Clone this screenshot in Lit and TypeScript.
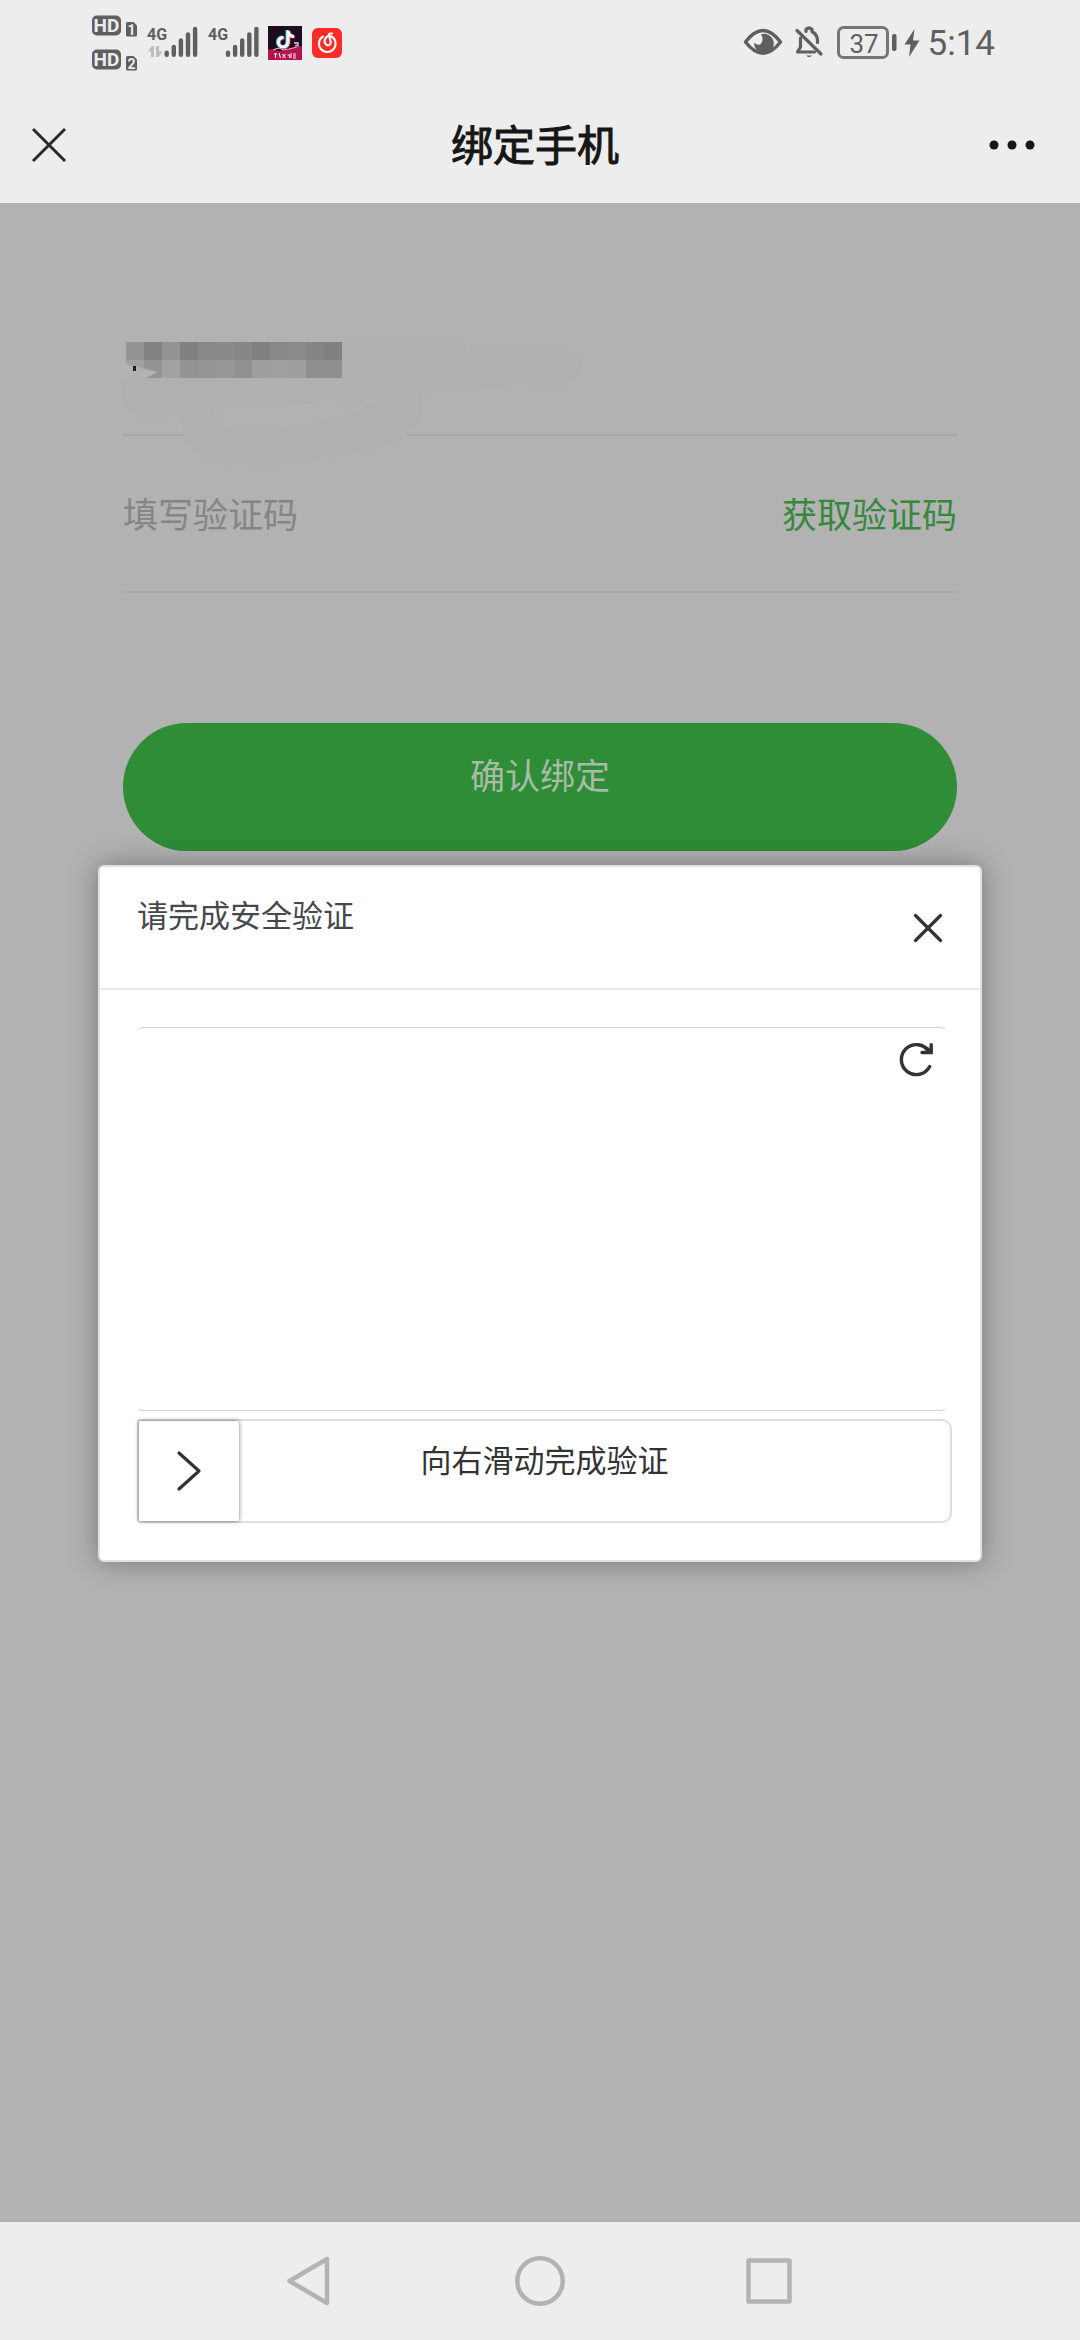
import { LitElement, html, css, svg } from "lit";
import { customElement, state } from "lit/decorators.js";

/* Grey levels of the masked phone number, one entry per cell. */
const MOSAIC = [
  ["#949494", "#838383", "#949494", "#818181", "#888888", "#898989", "#878787", "#808080", "#888888", "#8b8b8b", "#858585", "#818181"],
  ["#a1a1a1", "#949494", "#a2a2a2", "#949494", "#969696", "#979797", "#909090", "#9e9e9e", "#a0a0a0", "#9e9e9e", "#8f8f8f", "#8f8f8f"],
];
const CELL = 18;

@customElement("status-bar")
class StatusBar extends LitElement {
  static styles = css`
    :host {
      display: flex;
      justify-content: space-between;
      height: 86px;
      padding: 0 85px 0 90px;
      color: #5f5f5f;
      font-family: Roboto, "Noto Sans", sans-serif;
    }
    .group { display: flex; height: 86px; }
    svg { display: block; }
    .net { font-size: 16px; font-weight: 700; }
    .hd { font-weight: 700; font-size: 19px; }
    .sim { font-weight: 700; font-size: 14px; }
    .time { font-size: 35px; line-height: 88px; }
  `;

  private bars(x: number) {
    return svg`
      <g stroke="#5f5f5f" stroke-width="4.4" stroke-linecap="round">
        ${[52.8, 47, 40.5, 34.5, 29].map(
          (top, i) => svg`<path d="M${x + i * 7.1} ${top}V54.8"/>`
        )}
      </g>`;
  }

  render() {
    return html`
      <div class="group">
        <svg width="256" height="86" viewBox="90 0 256 86" aria-label="信号">
          <g fill="#5f5f5f">
            <rect x="92" y="15.500" width="29" height="20" rx="5"/>
            <rect x="92" y="49.500" width="29" height="20" rx="5"/>
            <path d="M127.500 22h6l3.500 3.500V35q0 1.500-1.500 1.500h-8q-1.500 0-1.500-1.500V23.500q0-1.500 1.500-1.500z"/>
            <path d="M127.500 56h6l3.500 3.500V69q0 1.500-1.500 1.500h-8q-1.500 0-1.500-1.500V57.500q0-1.500 1.500-1.500z"/>
          </g>
          <g class="hd" fill="#ededed" text-anchor="middle">
            <text x="106.500" y="32">HD</text>
            <text x="106.500" y="66">HD</text>
          </g>
          <g class="sim" fill="#ededed" text-anchor="middle">
            <text x="131.500" y="34.500">1</text>
            <text x="131.500" y="68.500">2</text>
          </g>
          <g class="net" fill="#5f5f5f">
            <text x="147" y="40">4G</text>
            <text x="208" y="40">4G</text>
          </g>
          <g fill="#bdbdbd">
            <path d="M148 51.500l4-5.500h2v11h-3v-5.500z"/>
            <path d="M162.500 51.500l-4 5.500h-2.500V46h3v5.500z"/>
          </g>
          ${this.bars(166.7)} ${this.bars(228)}
          <rect x="268" y="26" width="34" height="34" fill="#1e0c22"/>
          <path d="M268 49l12 2 10-2 12-3v14h-34z" fill="#b5134f"/>
          <path d="M273 50l6-2 4 2 6-1 8-2" stroke="#e8a9c4" stroke-width="1.200" fill="none"/>
          <g fill="none" stroke-width="3">
            <path d="M287 30v12a4.800 4.800 0 1 1-4.500-5M287 31q1.500 5 6.500 5" stroke="#29dfe0"/>
            <path d="M289 31v12a4.800 4.800 0 1 1-4.500-5M289 32q1.500 5 6 5" stroke="#f2365c"/>
            <path d="M288 30.500v12a4.800 4.800 0 1 1-4.500-5M288 31.500q1.500 5 6 5" stroke="#fff"/>
          </g>
          <path d="M294 43h4v4M295 46l2-1" stroke="#f3cfdc" stroke-width="1.300" fill="none"/>
          <path d="M274 54h3M275.500 53v5M279 53l1.500 5M282.500 54l3 4M285.500 54l-3 4M287.500 55h2v3M291 53v5M293 54h3M293 56h3M293 58h3" stroke="#fbe3ec" stroke-width="1.100" fill="none"/>
          <rect x="312" y="28" width="30" height="30" rx="6" fill="#fb2b26"/>
          <g fill="none" stroke="#fff" stroke-width="2.100" stroke-linecap="round">
            <path d="M323 36.500a8.300 8.300 0 1 0 8.500 0q-3-1.500-5.500 1-3 4.500.5 7.500 4 1 4.300-2.800Q330 39 329 36q-1-3 3-2.500"/>
          </g>
        </svg>
      </div>
      <div class="group">
        <svg width="187" height="86" viewBox="740 0 187 86" aria-label="电量">
          <path d="M744.500 42Q762 19 779.500 42 762 64.500 744.500 42z" fill="none" stroke="#5f5f5f" stroke-width="3.400" stroke-linejoin="round"/>
          <path d="M760 34.200a9.800 9.800 0 1 1-6.800 8.600q4.300 3.600 7.200.4 2.600-4.500-.4-9z" fill="#5f5f5f"/>
          <g fill="none" stroke="#5f5f5f" stroke-width="3.200" stroke-linecap="round" stroke-linejoin="round">
            <path d="M796 30.500l24 23.500"/>
            <path d="M799.500 38v9l-3 5h17"/>
            <path d="M805 31.500V29.500q3-3 6 0v2q5.500 3 5.500 9v2"/>
          </g>
          <path d="M805 55.500h6q-3 3-6 0z" fill="#5f5f5f"/>
          <rect x="837.500" y="27.500" width="49" height="30" rx="5" fill="none" stroke="#757575" stroke-width="3"/>
          <text x="863" y="52.500" text-anchor="middle" font-size="26" fill="#5f5f5f">37</text>
          <rect x="891" y="34" width="4.500" height="17" rx="2" fill="#5f5f5f"/>
          <path d="M913.500 29l-10 15.500h6L908 57l10.500-16.500H912z" fill="#5f5f5f"/>
        </svg>
        <span class="time">5:14</span>
      </div>
    `;
  }
}

@customElement("title-bar")
class TitleBar extends LitElement {
  static styles = css`
    :host {
      display: flex;
      align-items: center;
      height: 117px;
      font-family: "Noto Sans CJK SC", sans-serif;
    }
    h1 {
      flex: 1;
      margin: 0;
      padding: 0 0 4px 28px;
      font-size: 42px;
      line-height: 60px;
      font-weight: 400;
      -webkit-text-stroke: 1px #161616;
      text-align: center;
      color: #161616;
    }
    button {
      display: grid;
      place-items: center;
      height: 117px;
      padding: 0;
      border: 0;
      background: none;
    }
    .close { width: 98px; }
    .more { width: 136px; }
  `;

  render() {
    return html`
      <button class="close" aria-label="关闭">
        <svg width="36" height="36" viewBox="0 0 36 36" fill="none" stroke="#2b2b2b" stroke-width="3">
          <path d="M2 2l32 32M34 2L2 34"/>
        </svg>
      </button>
      <h1>绑定手机</h1>
      <button class="more" aria-label="更多">
        <svg width="46" height="12" viewBox="0 0 46 12" fill="#161616">
          <circle cx="5" cy="6" r="4.500"/><circle cx="23" cy="6" r="4.500"/><circle cx="41" cy="6" r="4.500"/>
        </svg>
      </button>
    `;
  }
}

@customElement("bind-form")
class BindForm extends LitElement {
  static styles = css`
    :host {
      display: block;
      padding: 94px 123px 0;
      font-family: "Noto Sans CJK SC", sans-serif;
      font-size: 35px;
    }
    .field {
      position: relative;
      display: flex;
      align-items: center;
      box-sizing: border-box;
      border-bottom: 2px solid #a8a8a8;
    }
    .phone { height: 139px; }
    .code { height: 157px; padding-bottom: 2px; }
    .mask {
      position: absolute;
      left: -8px;
      top: 38px;
    }
    input {
      flex: 1;
      min-width: 0;
      height: 56px;
      padding: 0;
      border: 0;
      outline: 0;
      background: none;
      font: inherit;
      color: #333;
    }
    input::placeholder { color: #858585; opacity: 1; }
    button {
      padding: 0;
      border: 0;
      font: inherit;
    }
    .send { background: none; color: #35893c; line-height: 56px; }
    .submit {
      display: block;
      width: 100%;
      height: 128px;
      margin-top: 130px;
      padding-bottom: 28px;
      border-radius: 64px;
      background: #2f8c37;
      color: #a9bba7;
    }
  `;

  render() {
    return html`
      <div class="field phone">
        <svg class="mask" width="480" height="140" viewBox="115 335 480 140" role="img" aria-label="手机号">
          <path fill="#b0b0b0" d="M126 342H467V351H570C588 353 584 386 560 386Q490 386 422 394C426 428 405 440 377 448Q300 466 235 467C195 462 180 440 180 414L140 420Q112 404 126 382z"/>
          <path fill="#b2b2b2" d="M214 409L378 400Q325 428 250 431 214 432 214 409z"/>
          ${MOSAIC.map((row, r) =>
            row.map(
              (tone, c) =>
                svg`<rect x=${126 + c * CELL} y=${342 + r * CELL} width=${CELL} height=${CELL} fill=${tone}/>`
            )
          )}
          <path fill="#b2b2b2" d="M125 364l33 8-13 6.500h-20z"/>
          <path fill="#1c1c1c" d="M133 366h3v5h-3z"/>
        </svg>
      </div>
      <div class="field code">
        <input type="text" inputmode="numeric" placeholder="填写验证码" aria-label="填写验证码">
        <button class="send">获取验证码</button>
      </div>
      <button class="submit">确认绑定</button>
    `;
  }
}

@customElement("slide-captcha")
class SlideCaptcha extends LitElement {
  static styles = css`
    :host {
      display: block;
      flex: 1;
      border: 2px solid #dfe2e4;
      border-radius: 6px;
      background: #fff;
      box-shadow: 0 0 28px rgba(0, 0, 0, 0.34);
      font-family: "Noto Sans CJK SC", sans-serif;
      font-size: 31px;
      line-height: 48px;
    }
    header {
      display: flex;
      align-items: center;
      justify-content: space-between;
      box-sizing: border-box;
      height: 123px;
      padding: 0 22px 0 37px;
      border-bottom: 2px solid #e7eaeb;
    }
    h2 {
      margin: 0;
      padding-bottom: 28px;
      font-size: inherit;
      font-weight: 400;
      color: #45494c;
    }
    button {
      display: grid;
      place-items: center;
      width: 60px;
      height: 60px;
      padding: 0;
      border: 0;
      background: none;
    }
    .body { padding: 37px 28px 37px 37px; }
    .panel {
      display: flex;
      justify-content: flex-end;
      box-sizing: border-box;
      height: 384px;
      margin-right: 5px;
      padding: 2px 0;
      border: 1px solid transparent;
      border-top-color: #d2d2d2;
      border-bottom-color: #d2d2d2;
      border-radius: 6px;
    }
    .track {
      display: grid;
      box-sizing: border-box;
      height: 104px;
      margin-top: 8px;
      border: 2px solid #dedede;
      border-radius: 2px 10px 10px 2px;
    }
    .track > * { grid-area: 1 / 1; }
    .hint {
      align-self: center;
      padding-bottom: 24px;
      text-align: center;
      color: #333;
    }
    input {
      appearance: none;
      width: 100%;
      height: 100px;
      margin: 0;
      outline: 0;
      background: none;
    }
    input::-webkit-slider-thumb {
      appearance: none;
      width: 100px;
      height: 100px;
      border-radius: 2px;
      background: #fff
        url("data:image/svg+xml,%3Csvg xmlns='http://www.w3.org/2000/svg' width='28' height='44' fill='none' stroke='%23333' stroke-width='3.2' stroke-linecap='round' stroke-linejoin='round'%3E%3Cpath d='M4 4l20 18L4 40'/%3E%3C/svg%3E")
        center no-repeat;
      box-shadow: 0 0 4px rgba(0, 0, 0, 0.55);
    }
  `;

  @state() private offset = 0;

  private slide(e: Event) {
    this.offset = Number((e.target as HTMLInputElement).value);
  }

  render() {
    return html`
      <header>
        <h2>请完成安全验证</h2>
        <button aria-label="关闭">
          <svg width="30" height="30" viewBox="0 0 30 30" fill="none" stroke="#333" stroke-width="3.200" stroke-linecap="round">
            <path d="M2.500 2.500l25 25M27.500 2.500l-25 25"/>
          </svg>
        </button>
      </header>
      <div class="body">
        <div class="panel">
          <button aria-label="刷新">
            <svg width="36" height="36" viewBox="0 0 36 36" fill="none" stroke="#333" stroke-linecap="round">
              <path d="M31.700 24.500A15 15 0 1 1 31 9.500" stroke-width="3.400"/>
              <path d="M33.200 2.800V10.500H24" stroke-width="3.400" stroke-linejoin="miter"/>
              <path d="M28.500 6.500l3.500 3" stroke-width="4"/>
            </svg>
          </button>
        </div>
        <div class="track">
          <label class="hint" for="slider">向右滑动完成验证</label>
          <input id="slider" type="range" min="0" max="100" .value=${String(this.offset)} @input=${this.slide}>
        </div>
      </div>
    `;
  }
}

@customElement("system-nav")
class SystemNav extends LitElement {
  static styles = css`
    :host {
      display: flex;
      justify-content: center;
      align-items: center;
      gap: 169px;
      height: 118px;
    }
    button {
      display: grid;
      place-items: center;
      width: 60px;
      height: 60px;
      padding: 0;
      border: 0;
      background: none;
    }
  `;

  render() {
    const icon = (shape: unknown) => html`
      <svg width="60" height="60" viewBox="0 0 60 60" fill="none" stroke="#b3b3b3" stroke-width="4.500" stroke-linejoin="round">${shape}</svg>`;
    return html`
      <button aria-label="返回">${icon(svg`<path d="M8.500 30L46 8V52z"/>`)}</button>
      <button aria-label="主屏幕">${icon(svg`<circle cx="30" cy="30" r="22.700"/>`)}</button>
      <button aria-label="最近任务">${icon(svg`<rect x="9.500" y="9.500" width="41" height="41"/>`)}</button>
    `;
  }
}

@customElement("app-root")
class AppRoot extends LitElement {
  static styles = css`
    :host {
      display: flex;
      flex-direction: column;
      min-height: 100vh;
      background: #ededed;
    }
    main {
      position: relative;
      flex: 1;
      background: #b2b2b2;
    }
    .overlay {
      position: absolute;
      inset: 0;
      display: flex;
      align-items: center;
      padding: 2px 98px 0;
    }
  `;

  render() {
    return html`
      <status-bar></status-bar>
      <title-bar></title-bar>
      <main>
        <bind-form></bind-form>
        <div class="overlay" role="dialog" aria-label="请完成安全验证">
          <slide-captcha></slide-captcha>
        </div>
      </main>
      <system-nav></system-nav>
    `;
  }
}
